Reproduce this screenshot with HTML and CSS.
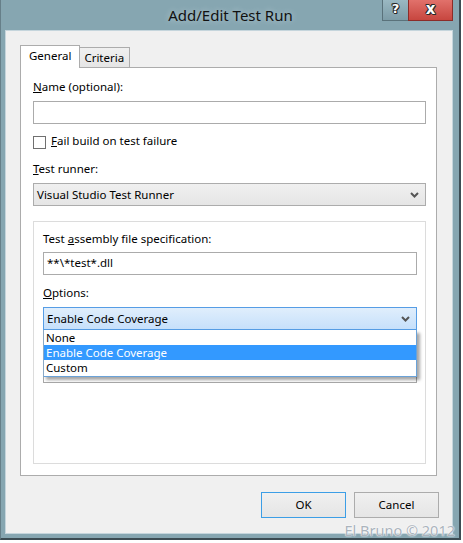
FILE: index.html
```html
<!DOCTYPE html>
<html>
<head>
<meta charset="utf-8">
<link rel="stylesheet" href="styles.css">
</head>
<body>
<div class="window">
  <div class="titlebar">
    <div class="title">Add/Edit Test Run</div>
    <div class="caption-buttons">
      <div class="cbtn help">?</div>
      <div class="cbtn close">x</div>
    </div>
  </div>
  <div class="client">
    <div class="tabs">
      <div class="tab active">General</div>
      <div class="tab">Criteria</div>
    </div>
    <div class="panel">
      <div class="label"><u>N</u>ame (optional):</div>
      <div class="input"></div>
      <div class="check-row">
        <span class="checkbox"></span>
        <span class="check-label"><u>F</u>ail build on test failure</span>
      </div>
      <div class="label gap12"><u>T</u>est runner:</div>
      <div class="select">
        <span>Visual Studio Test Runner</span>
        <svg class="chev" width="9" height="6" viewBox="0 0 9 6"><path d="M1 1 L4.5 4.5 L8 1" fill="none" stroke="#555" stroke-width="2"/></svg>
      </div>
      <div class="group">
        <div class="label">Test <u>a</u>ssembly file specification:</div>
        <div class="input small">**\*test*.dll</div>
        <div class="label gap10"><u>O</u>ptions:</div>
        <div class="combo">
          <div class="select focus">
            <span>Enable Code Coverage</span>
            <svg class="chev" width="9" height="6" viewBox="0 0 9 6"><path d="M1 1 L4.5 4.5 L8 1" fill="none" stroke="#555" stroke-width="2"/></svg>
          </div>
          <div class="under"></div>
          <div class="dropdown">
            <div class="item">None</div>
            <div class="item sel">Enable Code Coverage</div>
            <div class="item">Custom</div>
          </div>
        </div>
      </div>
    </div>
    <div class="buttons">
      <div class="btn default">OK</div>
      <div class="btn">Cancel</div>
    </div>
  </div>
  <div class="watermark">El Bruno © 2012</div>
</div>
</body>
</html>
```
FILE: styles.css
```css
html, body {
  margin: 0;
  padding: 0;
  background: #ffffff;
}
body {
  font-family: "Noto Sans", "Open Sans", sans-serif;
  font-size: 11.5px;
  color: #000;
}
.window {
  position: relative;
  width: 461px;
  height: 540px;
  box-sizing: border-box;
  background: #86a6b1;
  border-left: 1px solid #667f89;
  border-right: 2px solid #3c4c53;
  border-bottom: 2px solid #3c4c53;
  display: flex;
  flex-direction: column;
}
.titlebar {
  height: 30px;
  display: grid;
  grid-template-columns: 1fr auto 1fr;
  flex: none;
}
.title {
  grid-column: 2;
  font-size: 15px;
  line-height: 30px;
  color: #111;
  text-shadow: 0 0 6px rgba(230, 240, 245, 0.6);
  padding-left: 1px;
}
.caption-buttons {
  grid-column: 3;
  justify-self: end;
  display: flex;
  margin-right: 6px;
  height: 21px;
}
.cbtn {
  height: 21px;
  box-sizing: border-box;
  text-align: center;
  color: #fff;
  font-family: "DejaVu Sans", sans-serif;
  font-weight: bold;
  line-height: 18px;
  text-shadow: 1px 0 0 #2a2a2a, -1px 0 0 #2a2a2a, 0 1px 0 #2a2a2a, 0 -1px 0 #2a2a2a, 1px 1px 0 #2a2a2a, -1px -1px 0 #2a2a2a;
}
.help {
  width: 26px;
  font-size: 13px;
  background: linear-gradient(#9ab8c2, #7d9ca7);
  border: 1px solid #5a727b;
  border-top: none;
  border-right: none;
}
.close {
  width: 45px;
  font-size: 15px;
  background: linear-gradient(#e1716b, #c7463f);
  border: 1px solid #8b2c28;
  border-top: none;
}
.client {
  margin-left: 4px;
  width: 448px;
  height: 504px;
  box-sizing: border-box;
  background: #f0f0f0;
  border: 1px solid #c5d5dc;
  padding: 14px 0 0 14px;
  flex: none;
}
.tabs {
  display: flex;
  align-items: flex-end;
  height: 22px;
}
.tab {
  height: 20px;
  box-sizing: border-box;
  border: 1px solid #acacac;
  border-bottom: none;
  background: linear-gradient(#f0f0f0, #e5e5e5);
  padding: 0 5px 0 4px;
  line-height: 19px;
  margin-left: -1px;
}
.tab.active {
  height: 23px;
  margin-bottom: -1px;
  background: #fff;
  padding: 0 8px 0 8px;
  margin-left: 0;
  line-height: 19px;
  position: relative;
  z-index: 1;
}
.panel {
  width: 417px;
  height: 409px;
  box-sizing: border-box;
  background: #fff;
  border: 1px solid #acacac;
  padding: 11px 10px 0 12px;
}
.label {
  height: 16px;
  line-height: 16px;
}
.gap12 { margin-top: 12px; }
.gap10 { margin-top: 10px; }
.input {
  margin-top: 6px;
  height: 23px;
  box-sizing: border-box;
  border: 1px solid #ababab;
  background: #fff;
  padding-left: 3px;
  line-height: 20px;
}
.input.small {
  margin-top: 5px;
  width: 374px;
  height: 23px;
}
.check-row {
  margin-top: 11px;
  display: flex;
  align-items: center;
  height: 14px;
}
.checkbox {
  width: 13px;
  height: 13px;
  box-sizing: border-box;
  border: 1px solid #707070;
  background: #fff;
  margin-right: 5px;
}
.check-label {
  line-height: 14px;
  margin-top: -2px;
}
.select {
  margin-top: 6px;
  height: 23px;
  box-sizing: border-box;
  border: 1px solid #acacac;
  background: linear-gradient(#f0f0f0, #e5e5e5);
  display: flex;
  align-items: center;
  justify-content: space-between;
  padding: 0 6px 0 3px;
}
.chev {
  display: block;
}
.group {
  margin-top: 15px;
  height: 243px;
  box-sizing: border-box;
  border: 1px solid #dcdcdc;
  padding: 9px 8px 0 9px;
}
.combo {
  position: relative;
  width: 374px;
  margin-top: 6px;
}
.select.focus {
  margin-top: 0;
  border-color: #569de5;
  background: linear-gradient(#e0eefc, #c6e0fb);
}
.under {
  height: 53px;
  box-sizing: border-box;
  border: 1px solid #a8a8a8;
  border-top: none;
}
.dropdown {
  position: absolute;
  left: 0;
  top: 23px;
  width: 374px;
  box-sizing: border-box;
  background: #fff;
  border: 1px solid #6aa2d8;
  border-top: none;
  border-left-color: #8aa9c6;
  box-shadow: 3px 3px 3px rgba(0, 0, 0, 0.35);
  padding-bottom: 1px;
}
.item {
  height: 15px;
  line-height: 15px;
  padding-left: 2px;
}
.item.sel {
  background: #3399ff;
  color: #fff;
}
.buttons {
  display: flex;
  justify-content: flex-end;
  gap: 8px;
  margin-top: 16px;
  width: 419px;
}
.btn {
  width: 85px;
  height: 26px;
  box-sizing: border-box;
  border: 1px solid #acacac;
  background: linear-gradient(#f0f0f0, #e5e5e5);
  text-align: center;
  line-height: 24px;
}
.btn.default {
  border-color: #3c9ee6;
}
.watermark {
  position: absolute;
  right: 4px;
  bottom: -2px;
  font-family: "Noto Sans", sans-serif;
  font-size: 14.5px;
  color: #aab3bc;
  text-shadow: 0 0 2px #fff, 0 0 1px #fff;
}
```
